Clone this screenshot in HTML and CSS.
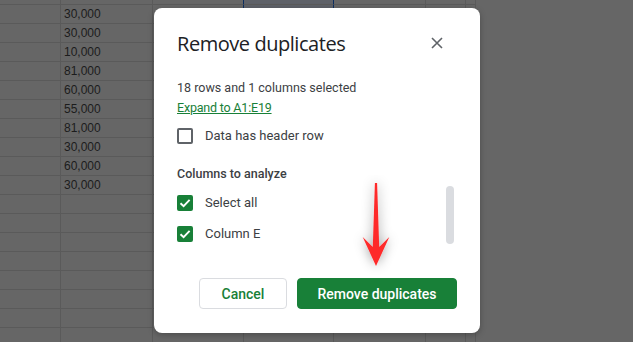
FILE: index.html
```html
<!DOCTYPE html>
<html>
<head>
<meta charset="utf-8">
<link rel="stylesheet" href="styles.css">
</head>
<body>
<div class="sheet">
  <div class="row"><div class="c"></div><div class="c"></div><div class="c"></div><div class="c sel"></div><div class="c"></div><div class="c"></div><div class="c"></div></div>
  <div class="row"><div class="c"></div><div class="c">30,000</div><div class="c"></div><div class="c sel"></div><div class="c"></div><div class="c"></div><div class="c"></div></div>
  <div class="row"><div class="c"></div><div class="c">30,000</div><div class="c"></div><div class="c sel"></div><div class="c"></div><div class="c"></div><div class="c"></div></div>
  <div class="row"><div class="c"></div><div class="c">10,000</div><div class="c"></div><div class="c sel"></div><div class="c"></div><div class="c"></div><div class="c"></div></div>
  <div class="row"><div class="c"></div><div class="c">81,000</div><div class="c"></div><div class="c sel"></div><div class="c"></div><div class="c"></div><div class="c"></div></div>
  <div class="row"><div class="c"></div><div class="c">60,000</div><div class="c"></div><div class="c sel"></div><div class="c"></div><div class="c"></div><div class="c"></div></div>
  <div class="row"><div class="c"></div><div class="c">55,000</div><div class="c"></div><div class="c sel"></div><div class="c"></div><div class="c"></div><div class="c"></div></div>
  <div class="row"><div class="c"></div><div class="c">81,000</div><div class="c"></div><div class="c sel"></div><div class="c"></div><div class="c"></div><div class="c"></div></div>
  <div class="row"><div class="c"></div><div class="c">30,000</div><div class="c"></div><div class="c sel"></div><div class="c"></div><div class="c"></div><div class="c"></div></div>
  <div class="row"><div class="c"></div><div class="c">60,000</div><div class="c"></div><div class="c sel"></div><div class="c"></div><div class="c"></div><div class="c"></div></div>
  <div class="row"><div class="c"></div><div class="c">30,000</div><div class="c"></div><div class="c sel"></div><div class="c"></div><div class="c"></div><div class="c"></div></div>
  <div class="row"><div class="c"></div><div class="c"></div><div class="c"></div><div class="c sel"></div><div class="c"></div><div class="c"></div><div class="c"></div></div>
  <div class="row"><div class="c"></div><div class="c"></div><div class="c"></div><div class="c sel"></div><div class="c"></div><div class="c"></div><div class="c"></div></div>
  <div class="row"><div class="c"></div><div class="c"></div><div class="c"></div><div class="c sel"></div><div class="c"></div><div class="c"></div><div class="c"></div></div>
  <div class="row"><div class="c"></div><div class="c"></div><div class="c"></div><div class="c sel"></div><div class="c"></div><div class="c"></div><div class="c"></div></div>
  <div class="row"><div class="c"></div><div class="c"></div><div class="c"></div><div class="c sel"></div><div class="c"></div><div class="c"></div><div class="c"></div></div>
  <div class="row"><div class="c"></div><div class="c"></div><div class="c"></div><div class="c sel"></div><div class="c"></div><div class="c"></div><div class="c"></div></div>
  <div class="row"><div class="c"></div><div class="c"></div><div class="c"></div><div class="c sel"></div><div class="c"></div><div class="c"></div><div class="c"></div></div>
  <div class="row"><div class="c"></div><div class="c"></div><div class="c"></div><div class="c"></div><div class="c"></div><div class="c"></div><div class="c"></div></div>
</div>

<div class="dialog">
  <div class="head">
    <h1 class="title">Remove duplicates</h1>
    <svg class="close" width="12" height="12" viewBox="0 0 12 12"><path d="M1 1 L11 11 M11 1 L1 11" stroke="#5f6368" stroke-width="1.6" fill="none"/></svg>
  </div>
  <div class="info">18 rows and 1 columns selected</div>
  <a class="link">Expand to A1:E19</a>
  <label class="opt first"><span class="box"></span><span>Data has header row</span></label>
  <div class="section">
    <div class="list">
      <div class="subhead">Columns to analyze</div>
      <label class="opt"><span class="box on"><svg width="12" height="12" viewBox="0 0 12 12"><path d="M1.5 6.2 L4.6 9.2 L10.6 2.8" stroke="#fff" stroke-width="1.9" fill="none"/></svg></span><span>Select all</span></label>
      <label class="opt"><span class="box on"><svg width="12" height="12" viewBox="0 0 12 12"><path d="M1.5 6.2 L4.6 9.2 L10.6 2.8" stroke="#fff" stroke-width="1.9" fill="none"/></svg></span><span>Column E</span></label>
    </div>
    <div class="scroll"></div>
  </div>
  <div class="buttons">
    <button class="btn cancel">Cancel</button>
    <button class="btn primary">Remove duplicates</button>
  </div>
</div>

<svg class="arrow" width="60" height="100" viewBox="346 175 60 100">
  <defs>
    <filter id="sh" x="-50%" y="-50%" width="200%" height="200%">
      <feDropShadow dx="0" dy="0" stdDeviation="6" flood-color="#000" flood-opacity="0.4"/>
    </filter>
  </defs>
  <polygon filter="url(#sh)" fill="#fe2b2b" points="374.9,183 377.1,183 379.2,247 389.3,237 376,266 362.7,237 372.8,247"/>
</svg>
</body>
</html>
```
FILE: styles.css
```css
* { box-sizing: border-box; }
html, body { margin: 0; padding: 0; }
body {
  width: 633px;
  height: 342px;
  overflow: hidden;
  background: #666666;
  position: relative;
  font-family: Roboto, "Liberation Sans", sans-serif;
}
.sheet {
  margin-top: -14px;
  width: 476px;
}
.row {
  display: grid;
  grid-template-columns: 61px 92px 91px 90px 92px 40px 10px;
  height: 19px;
}
.c {
  border-right: 1px solid #5a5a5a;
  border-bottom: 1px solid #5a5a5a;
  font-family: "Liberation Sans", Arial, sans-serif;
  font-size: 12px;
  line-height: 18px;
  color: #1c1c1c;
  padding-left: 3px;
}
.c.sel {
  background: #5e6168;
  border-left: 1px solid #0b2d5e;
  border-right: 1px solid #0b2d5e;
  margin-left: -1px;
}
.dialog {
  position: absolute;
  left: 154px;
  top: 8px;
  width: 326px;
  height: 325px;
  background: #fff;
  border-radius: 8px;
  box-shadow: 0 2px 6px rgba(0,0,0,0.25);
  padding: 22px 23px 24px 23px;
  display: flex;
  flex-direction: column;
  color: #3c4043;
}
.head {
  display: flex;
  align-items: center;
  justify-content: space-between;
  height: 26px;
}
.title {
  margin: 0;
  font-family: "Open Sans", Roboto, sans-serif;
  font-weight: 400;
  font-size: 20px;
  letter-spacing: -0.45px;
  color: #202124;
}
.close { margin-right: 14px; }
.info {
  margin-top: 22px;
  font-size: 12.5px;
  line-height: 20px;
}
.link {
  font-size: 12.5px;
  letter-spacing: -0.2px;
  line-height: 20px;
  color: #188038;
  text-decoration: underline;
}
.opt {
  display: flex;
  align-items: center;
  gap: 12px;
  font-size: 13px;
  line-height: 20px;
  height: 20px;
}
.opt.first { margin-top: 8px; }
.box {
  width: 16px;
  height: 16px;
  border: 2px solid #5f6368;
  border-radius: 2px;
  display: flex;
  align-items: center;
  justify-content: center;
  flex: none;
}
.box.on {
  background: #188038;
  border-color: #188038;
}
.section {
  display: flex;
  justify-content: space-between;
  margin-top: 20px;
  height: 88px;
}
.list {
  display: flex;
  flex-direction: column;
  gap: 11px;
}
.subhead {
  font-size: 12.5px;
  font-weight: 500;
  line-height: 16px;
  color: #3c4043;
}
.scroll {
  width: 8px;
  height: 58px;
  margin-top: 20px;
  margin-right: 3px;
  background: #dadce0;
  border-radius: 4px;
}
.buttons {
  margin-top: auto;
  display: flex;
  justify-content: flex-end;
  gap: 10px;
}
.btn {
  height: 31px;
  border-radius: 4px;
  font-family: Roboto, sans-serif;
  font-size: 14px;
  font-weight: 500;
  cursor: pointer;
}
.cancel {
  width: 88px;
  background: #fff;
  border: 1px solid #dadce0;
  color: #188038;
}
.primary {
  width: 160px;
  background: #188038;
  border: 1px solid #188038;
  color: #fff;
}
.arrow {
  position: absolute;
  left: 346px;
  top: 175px;
}
```
